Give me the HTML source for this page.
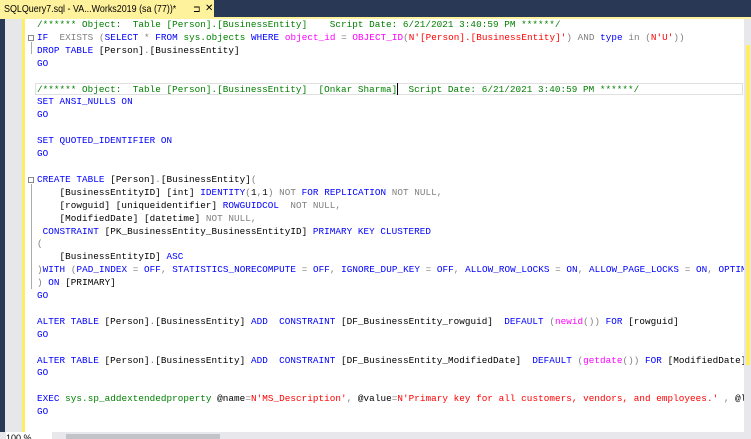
<!DOCTYPE html>
<html><head><meta charset="utf-8"><style>
body{margin:0;width:751px;height:439px;overflow:hidden;background:#fff;position:relative;font-family:"Liberation Mono",monospace}
.top{position:absolute;left:0;top:0;width:751px;height:18px;background:#293955}
.tab{position:absolute;left:0;top:0;width:214px;height:18px;background:#fff29d}
.tabt{position:absolute;left:4px;top:0;font:10.5px "Liberation Sans",sans-serif;color:#000;line-height:18px;white-space:nowrap;transform:scaleX(0.85);transform-origin:0 0}
.tabline{position:absolute;left:0;top:17px;width:751px;height:2px;background:#fff29d}
.dark{position:absolute;left:0;top:19px;width:5px;height:420px;background:#293955}
.gut{position:absolute;left:5px;top:19px;width:17px;height:414px;background:#e6e7e8}
.ybar{position:absolute;left:22px;top:19px;width:3px;height:414px;background:#ffee62}
.code{position:absolute;left:37px;top:19px;width:707px;overflow:hidden;font-size:9.3px;letter-spacing:0.05px;line-height:12.9px;white-space:pre;color:#000}
.k{color:#0000ff}.g{color:#808080}.c{color:#008000}.s{color:#ff0000}.m{color:#ff00ff}
.cur{position:absolute;left:35px;top:83px;width:708px;height:12px;border:1px solid #e0e0e0;box-sizing:border-box}
.caret{position:absolute;left:397px;top:83px;width:1px;height:12px;background:#000}
.vs{position:absolute;left:744px;top:19px;width:7px;height:414px;background:#e8e8ec}
.vsy{position:absolute;left:746px;top:45px;width:4px;height:320px;background:#ffee62}
.bot{position:absolute;left:0;top:432px;width:751px;height:7px;background:#e8e8ec}
.zoom{position:absolute;left:6px;top:432px;width:46px;height:7px;background:#fff;font:9px "Liberation Sans",sans-serif;line-height:12px;overflow:hidden}
.thumb{position:absolute;left:66px;top:434px;width:154px;height:5px;background:#c2c3c9}
.fold{position:absolute;left:28px;width:6px;height:6px;border:1px solid #888;box-sizing:border-box;background:#fff}
.fl{position:absolute;left:31px;width:1px;background:#aaa}
.pin{position:absolute;left:193px;top:0;font:9px "Liberation Sans",sans-serif;line-height:18px}
.x{position:absolute;left:205px;top:0;font:10px "Liberation Sans",sans-serif;line-height:18px}
</style></head><body>
<div class="top"></div>
<div class="tab"></div><div class="tabt">SQLQuery7.sql - VA...Works2019 (sa (77))*</div>
<div class="pin">⊐</div><div class="x">✕</div>
<div class="tabline"></div>
<div class="dark"></div><div class="gut"></div><div class="ybar"></div>
<div class="fold" style="top:35px"></div><div class="fl" style="top:42px;height:12px"></div>
<div class="fold" style="top:177px"></div><div class="fl" style="top:184px;height:105px"></div>
<div class="cur"></div>
<div class="code"><span class="c">/****** Object:  Table [Person].[BusinessEntity]    Script Date: 6/21/2021 3:40:59 PM ******/</span>
<span class="k">IF</span>  <span class="g">EXISTS</span> <span class="g">(</span><span class="k">SELECT</span> <span class="g">*</span> <span class="k">FROM</span> <span class="c">sys.objects</span> <span class="k">WHERE</span> <span class="m">object_id</span> <span class="g">=</span> <span class="m">OBJECT_ID</span><span class="g">(</span><span class="s">N'[Person].[BusinessEntity]'</span><span class="g">)</span> <span class="g">AND</span> <span class="k">type</span> <span class="g">in</span> <span class="g">(</span><span class="s">N'U'</span><span class="g">))</span>
<span class="k">DROP TABLE</span> [Person]<span class="g">.</span>[BusinessEntity]
<span class="k">GO</span>

<span class="c">/****** Object:  Table [Person].[BusinessEntity]  [Onkar Sharma]  Script Date: 6/21/2021 3:40:59 PM ******/</span>
<span class="k">SET ANSI_NULLS ON</span>
<span class="k">GO</span>

<span class="k">SET QUOTED_IDENTIFIER ON</span>
<span class="k">GO</span>

<span class="k">CREATE TABLE</span> [Person]<span class="g">.</span>[BusinessEntity]<span class="g">(</span>
    [BusinessEntityID] [int] <span class="k">IDENTITY</span><span class="g">(</span>1<span class="g">,</span>1<span class="g">)</span> <span class="g">NOT</span> <span class="k">FOR REPLICATION</span> <span class="g">NOT NULL,</span>
    [rowguid] [uniqueidentifier] <span class="k">ROWGUIDCOL</span>  <span class="g">NOT NULL,</span>
    [ModifiedDate] [datetime] <span class="g">NOT NULL,</span>
 <span class="k">CONSTRAINT</span> [PK_BusinessEntity_BusinessEntityID] <span class="k">PRIMARY KEY CLUSTERED</span>
<span class="g">(</span>
    [BusinessEntityID] <span class="k">ASC</span>
<span class="g">)</span><span class="k">WITH</span> <span class="g">(</span><span class="k">PAD_INDEX</span> <span class="g">=</span> <span class="k">OFF</span><span class="g">,</span> <span class="k">STATISTICS_NORECOMPUTE</span> <span class="g">=</span> <span class="k">OFF</span><span class="g">,</span> <span class="k">IGNORE_DUP_KEY</span> <span class="g">=</span> <span class="k">OFF</span><span class="g">,</span> <span class="k">ALLOW_ROW_LOCKS</span> <span class="g">=</span> <span class="k">ON</span><span class="g">,</span> <span class="k">ALLOW_PAGE_LOCKS</span> <span class="g">=</span> <span class="k">ON</span><span class="g">,</span> <span class="k">OPTIMIZE_FOR</span>
<span class="g">)</span> <span class="k">ON</span> [PRIMARY]
<span class="k">GO</span>

<span class="k">ALTER TABLE</span> [Person]<span class="g">.</span>[BusinessEntity] <span class="k">ADD</span>  <span class="k">CONSTRAINT</span> [DF_BusinessEntity_rowguid]  <span class="k">DEFAULT</span> <span class="g">(</span><span class="m">newid</span><span class="g">())</span> <span class="k">FOR</span> [rowguid]
<span class="k">GO</span>

<span class="k">ALTER TABLE</span> [Person]<span class="g">.</span>[BusinessEntity] <span class="k">ADD</span>  <span class="k">CONSTRAINT</span> [DF_BusinessEntity_ModifiedDate]  <span class="k">DEFAULT</span> <span class="g">(</span><span class="m">getdate</span><span class="g">())</span> <span class="k">FOR</span> [ModifiedDate]
<span class="k">GO</span>

<span class="k">EXEC</span> <span class="c">sys.sp_addextendedproperty</span> @name<span class="g">=</span><span class="s">N'MS_Description'</span><span class="g">,</span> @value<span class="g">=</span><span class="s">N'Primary key for all customers, vendors, and employees.'</span> <span class="g">,</span> @level0type
<span class="k">GO</span></div>
<div class="caret"></div>
<div class="vs"></div><div class="vsy"></div>
<div class="bot"></div><div class="zoom">100 %</div><div class="thumb"></div>
</body></html>
